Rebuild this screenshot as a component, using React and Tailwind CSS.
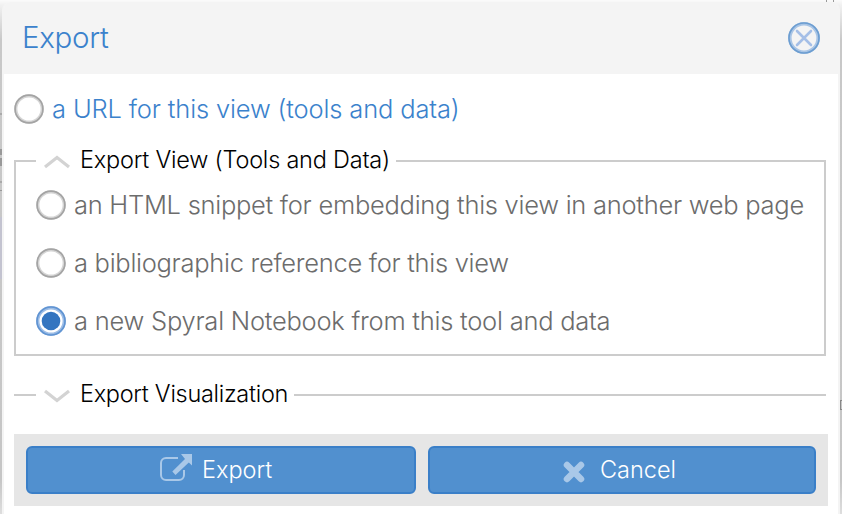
function Radio({ checked = false }) {
  return (
    <svg className="size-[30px] shrink-0" viewBox="0 0 30 30" fill="none">
      {checked ? (
        <>
          <circle cx="15" cy="15" r="13.3" fill="#fff" stroke="#9dbde6" strokeWidth="3.4" />
          <circle cx="15" cy="15" r="14" stroke="#6094d2" strokeWidth="1.6" />
          <circle cx="15" cy="15" r="9.3" fill="#3475c0" />
        </>
      ) : (
        <>
          <circle cx="15" cy="15" r="13.2" stroke="#d6d6d6" strokeWidth="3.2" />
          <circle cx="15" cy="15" r="13.9" stroke="#a4a4a4" strokeWidth="1.7" />
        </>
      )}
    </svg>
  );
}

function Option({ checked, children, className }) {
  return (
    <label className={`flex h-[30px] items-center gap-2 whitespace-nowrap ${className}`}>
      <Radio checked={checked} />
      <span className="leading-[30px]">{children}</span>
    </label>
  );
}

function Chevron({ down = false }) {
  return (
    <svg className="mt-1 h-4 w-[26px]" viewBox="0 0 26 16" fill="none" stroke="#d3d3d3" strokeWidth="3.2">
      <path d={down ? "M1 2L13 11.5L25 2" : "M1 12L13 2.5L25 12"} />
    </svg>
  );
}

// Slivers of the page behind the dialog that show past its edges.
function Backdrop() {
  return (
    <div className="pointer-events-none absolute inset-0">
      <span className="absolute top-[113px] left-0 h-[2px] w-[2px] bg-[#aaa]" />
      <span className="absolute top-[149px] left-0 h-[6px] w-[2px] bg-[#999]" />
      <span className="absolute top-[158px] left-0 h-[8px] w-[2px] bg-[#999]" />
      <span className="absolute top-[181px] left-0 h-[2px] w-[2px] bg-[#aaa]" />
      <span className="absolute top-[190px] left-0 h-px w-[2px] bg-[#999]" />
      <span className="absolute top-[217px] left-0 h-[62px] w-[2px] bg-[#c3c3d0]" />
      <span className="absolute top-0 left-[826px] h-[2px] w-px bg-[#999]" />
      <span className="absolute top-0 left-[833px] h-[2px] w-px bg-[#999]" />
      <span className="absolute top-[400px] left-[840px] h-[10px] w-[2px] border-y border-l border-[#888]" />
    </div>
  );
}

export default function App() {
  return (
    <div className="relative h-[514px] w-[842px] overflow-hidden bg-[linear-gradient(to_bottom,#fbfbfb_0,#f1f1f1_5px,#c8c8c8_40px,#c6c6c6_480px,#dedede)] px-[2px] pt-[2px] font-[Inter,'Liberation_Sans',sans-serif] font-light">
      <Backdrop />
      <div className="h-[512px] rounded-t-[8px] border-x-2 border-[#f4f4f4] bg-white">
        <header className="flex h-[72px] items-center justify-between rounded-t-[6px] bg-[#f4f4f4] pr-[18px] pl-[18px] text-[#3b82cc]">
          <h1 className="-mt-0.5 text-[29.5px] leading-[36px] tracking-[-0.3px]">Export</h1>
          <svg className="size-8" viewBox="0 0 32 32" fill="none">
            <circle cx="16" cy="16" r="14.2" stroke="#a9c5e6" strokeWidth="3.6" />
            <circle cx="16" cy="16" r="15" stroke="#6c9dd0" strokeWidth="1.6" />
            <path d="M9 9L23 23M23 9L9 23" stroke="#a5bfe7" strokeWidth="2.6" strokeLinecap="round" />
          </svg>
        </header>
        <main className="pl-[10px] text-[25.5px] text-[#6c6c6c]">
          <Option className="mt-5 tracking-[-0.15px] text-[#3b82cc]">a URL for this view (tools and data)</Option>
          <fieldset className="mt-[23px] h-[209px] w-[812px] border-2 border-[#ccc] pl-5">
            <legend className="flex h-7 w-[360px] items-center gap-[10px] pl-2 text-[23.5px] leading-7 whitespace-nowrap text-black">
              <Chevron />
              <span className="-mt-0.5 tracking-[-0.22px]">Export View (Tools and Data)</span>
            </legend>
            <Option className="mt-[15px] tracking-[-0.27px]">an HTML snippet for embedding this view in another web page</Option>
            <Option className="mt-7 tracking-[-0.29px]">a bibliographic reference for this view</Option>
            <Option checked className="mt-7 tracking-[-0.24px]">a new Spyral Notebook from this tool and data</Option>
          </fieldset>
          <fieldset className="mt-[25px] h-[53px] w-[812px] border-t-2 border-[#ccc] pl-[22px]">
            <legend className="flex h-7 w-[258px] items-center gap-[10px] pl-2 text-[23.5px] leading-7 whitespace-nowrap text-black">
              <Chevron down />
              <span className="-mt-0.5 tracking-[-0.3px]">Export Visualization</span>
            </legend>
          </fieldset>
          <footer className="flex h-[72px] w-[814px] gap-3 bg-[#e6e6e6] p-3 text-[23.5px] text-white">
            <button className="flex w-[390px] items-center rounded-[6px] border-2 border-[#3a7fc8] bg-[#5190cf] pl-[132px]">
              <svg className="h-8 w-8 shrink-0" viewBox="0 0 32 32" fill="none">
                <path d="M18 4H6A5 5 0 0 0 1 9V21A5 5 0 0 0 6 26H19A5 5 0 0 0 24 21V16" stroke="#a9c8e8" strokeWidth="2" />
                <path d="M21 0H32V11.500L28.800 8.500L15.500 21L12.300 17.500L25 5Z" fill="#a9c8e8" />
              </svg>
              <span className="ml-[10px]">Export</span>
            </button>
            <button className="flex w-[388px] items-center rounded-[6px] border-2 border-[#3a7fc8] bg-[#5190cf] pl-[132px]">
              <svg className="mt-1 size-6 shrink-0" viewBox="0 0 24 24" fill="none">
                <path d="M5 5L19 19M19 5L5 19" stroke="#a9c8e8" strokeWidth="6.500" strokeLinecap="round" />
              </svg>
              <span className="ml-[14px]">Cancel</span>
            </button>
          </footer>
        </main>
      </div>
    </div>
  );
}
